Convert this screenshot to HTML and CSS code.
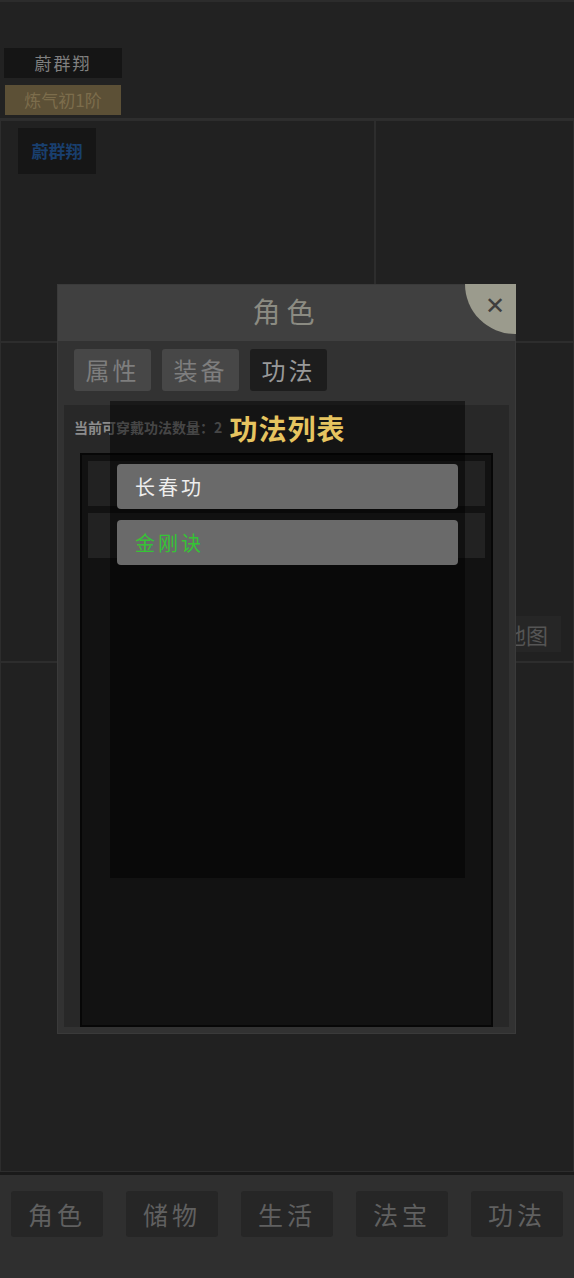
FILE: index.html
```html
<!DOCTYPE html>
<html lang="zh">
<head>
  <meta charset="UTF-8">
  <meta name="viewport" content="width=device-width, initial-scale=1.0">
  <title>角色 - 功法</title>
  <link rel="stylesheet" href="styles.css">
</head>
<body>
  <div class="page">
    <div class="top">
      <div class="name-tag">蔚群翔</div>
      <div class="realm-tag">炼气初1阶</div>
    </div>

    <div class="grid">
      <div class="cell cell-a">
        <div class="player-tag">蔚群翔</div>
      </div>
      <div class="cell cell-b"></div>
      <div class="cell cell-wide cell-mid">
        <div class="map-btn">地图</div>
      </div>
      <div class="cell cell-wide cell-low"></div>
    </div>

    <div class="nav">
      <div class="nav-btn">角色</div>
      <div class="nav-btn">储物</div>
      <div class="nav-btn">生活</div>
      <div class="nav-btn">法宝</div>
      <div class="nav-btn">功法</div>
    </div>
  </div>

  <!-- role dialog -->
  <div class="modal">
    <div class="modal-head">
      <span class="modal-title">角色</span>
      <div class="close">&#x2715;</div>
    </div>
    <div class="tabs">
      <div class="tab">属性</div>
      <div class="tab">装备</div>
      <div class="tab active">功法</div>
    </div>
    <div class="panel">
      <div class="count">当前可穿戴功法数量：2</div>
      <div class="slots">
        <div class="slot"></div>
        <div class="slot"></div>
      </div>
    </div>

    <div class="picker">
      <div class="picker-title">功法列表</div>
      <div class="skill">长春功</div>
      <div class="skill green">金刚诀</div>
    </div>
  </div>
</body>
</html>
```

FILE: styles.css
```css
* { box-sizing: border-box; }
body { margin: 0; background: #1f1f1f; font-family: "Noto Sans CJK SC", "DejaVu Sans", sans-serif; }
.page { width: 574px; height: 1278px; display: flex; flex-direction: column; }

.top { height: 120px; border-top: 2px solid #2c2c2c; border-bottom: 2px solid #2e2e2e; background: #222; padding: 46px 0 0 4px; }
.name-tag { width: 118px; height: 30px; background: #151515; color: #808080; font-size: 17px; line-height: 30px; text-align: center; letter-spacing: 2px; }
.realm-tag { width: 116px; height: 30px; margin: 7px 0 0 1px; background: #5c5036; color: #7c6d4c; font-size: 17px; line-height: 30px; text-align: center; }

.grid { flex: 1; display: grid; grid-template-columns: 375px 1fr; grid-template-rows: 222px 320px 1fr; }
.cell { border: 1px solid #2d2d2d; background: #212121; }
.cell-wide { grid-column: 1 / 3; }
.cell-a { padding: 7px 0 0 17px; }
.player-tag { width: 78px; height: 46px; background: #161616; color: #193f6e; font-size: 17px; line-height: 46px; text-align: center; font-weight: bold; }
.cell-mid { display: flex; justify-content: flex-end; align-items: flex-end; padding: 0 12px 9px 0; }
.map-btn { width: 70px; height: 36px; background: #262626; color: #555; font-size: 22px; line-height: 36px; text-align: center; }

.nav { height: 106px; background: #2f2f2f; border-top: 3px solid #1a1a1a; display: flex; justify-content: space-between; padding: 16px 11px 0; }
.nav-btn { width: 92px; height: 46px; background: #262626; border-radius: 3px; color: #606060; font-size: 25px; line-height: 46px; text-align: center; letter-spacing: 4px; }

.modal { position: absolute; left: 57px; top: 284px; width: 459px; height: 750px; background: #323232; border: 1px solid #3a3a3a; }
.modal-head { height: 56px; background: #404040; display: flex; justify-content: center; align-items: center; padding-bottom: 4px; }
.modal-title { color: #8b8b82; font-size: 28px; letter-spacing: 6px; }
.close { position: absolute; right: -1px; top: -1px; width: 51px; height: 50px; background: #9b9b8d; border-bottom-left-radius: 50px; color: #3e3e3e; font-size: 24px; line-height: 40px; text-align: right; padding-right: 11px; }

.tabs { display: flex; gap: 11px; padding: 8px 0 0 16px; height: 64px; }
.tab { width: 77px; height: 42px; background: #474747; border-radius: 3px; color: #7e7e7e; font-size: 24px; line-height: 42px; text-align: center; letter-spacing: 3px; }
.tab.active { background: #1d1d1d; color: #999; }

.panel { margin: 0 6px 0 6px; height: 622px; background: #282828; padding: 12px 16px 0 10px; }
.count { color: #8c8c8c; font-size: 14px; font-weight: bold; height: 36px; }
.slots { height: 574px; margin: 0 0 0 6px; background: #121212; border: 2px solid #070707; padding: 6px 6px 0; }
.slot { height: 45px; background: #222; margin-bottom: 7px; }

.picker { position: absolute; left: 52px; top: 116px; width: 355px; height: 477px; background: rgba(0, 0, 0, 0.5); padding: 0 7px; }
.picker-title { color: #e6c460; font-size: 28px; font-weight: bold; text-align: center; line-height: 54px; height: 63px; letter-spacing: 1px; }
.skill { height: 45px; background: #6a6a6a; border-radius: 4px; margin-bottom: 11px; color: #eeeeee; font-size: 20px; line-height: 45px; padding-left: 18px; letter-spacing: 3px; }
.skill.green { color: #35c435; }
```
